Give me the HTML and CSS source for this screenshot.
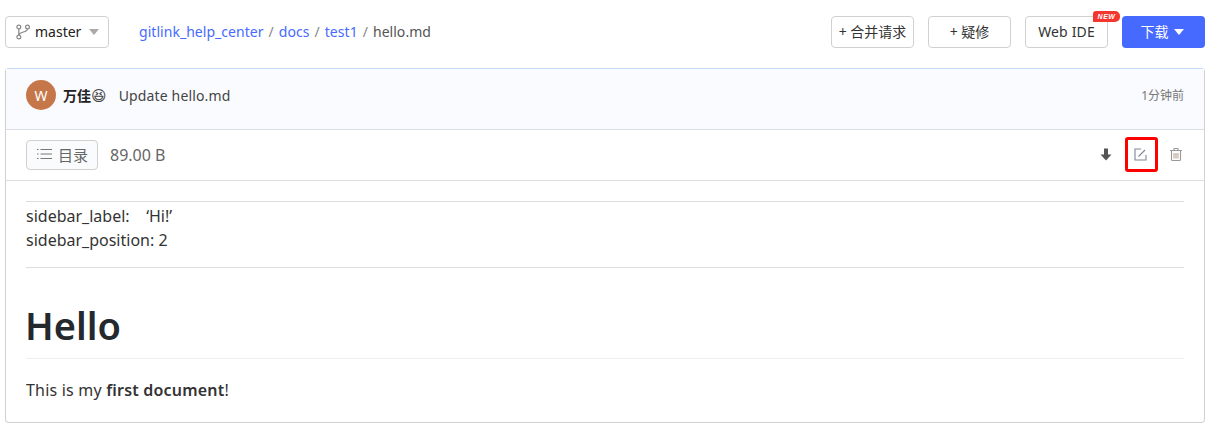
FILE: index.html
```html
<!DOCTYPE html>
<html lang="zh">
<head>
<meta charset="utf-8">
<title>hello.md</title>
<link rel="stylesheet" href="styles.css">
</head>
<body>
<div class="top">
  <div class="left">
    <button class="btn branch">
      <svg class="branch-icon" width="14" height="16" viewBox="0 0 14 16" fill="none" stroke="#888" stroke-width="1.200"><circle cx="2.800" cy="3" r="1.900"/><circle cx="2.800" cy="13" r="1.900"/><circle cx="11.500" cy="3" r="1.900"/><path d="M2.800 4.900V11.100M11.500 4.900C11.500 8.500 3.400 7.500 2.800 11.100"/></svg>
      <span class="branch-name">master</span>
      <i class="caret grey"></i>
    </button>
    <nav class="crumbs">
      <a>gitlink_help_center</a><span class="sep">/</span><a>docs</a><span class="sep">/</span><a>test1</a><span class="sep">/</span><span class="file">hello.md</span>
    </nav>
  </div>
  <div class="actions">
    <button class="btn act">+ 合并请求</button>
    <button class="btn act">+ 疑修</button>
    <div class="ide-wrap">
      <button class="btn act ide">Web IDE</button>
      <span class="new">NEW</span>
    </div>
    <button class="btn download">下载<i class="caret white"></i></button>
  </div>
</div>
<main class="card">
  <header class="commit">
    <div class="avatar">W</div>
    <strong class="author">万佳<span class="emoji">😆</span></strong>
    <span class="message">Update hello.md</span>
    <span class="time">1分钟前</span>
  </header>
  <div class="toolbar">
    <button class="toc">
      <svg width="16" height="12" viewBox="0 0 16 12" fill="none" stroke="#777" stroke-width="1"><path d="M0 1.500H1.500M0 6H1.500M0 10.500H1.500M3.500 1.500H15M3.500 6H15M3.500 10.500H15"/></svg>
      目录
    </button>
    <span class="size">89.00 B</span>
    <div class="tools">
      <svg class="ico" width="12" height="13" viewBox="0 0 12 13"><path d="M4 0.500H8V6.500H11.500L6 12.500 0.500 6.500H4Z" fill="#555"/></svg>
      <svg class="ico" width="13" height="13" viewBox="0 0 13 13" fill="none" stroke="#7b8794" stroke-width="1.100"><path d="M7 1H1V12H12V7"/><path d="M4.500 8.500L11 2"/></svg>
      <svg class="ico" width="14" height="15" viewBox="0 0 14 15" fill="none" stroke-width="1.100"><path d="M1 3.500H13M5 3.500V1.500H9V3.500" stroke="#999"/><path d="M2.500 3.500V12.500Q2.500 13.500 3.500 13.500H10.500Q11.500 13.500 11.500 12.500V3.500" stroke="#999"/><path d="M5 6V11.500" stroke="#d9a066"/><path d="M7 6V11.500" stroke="#7fa8d9"/><path d="M9 6V11.500" stroke="#d9a066"/></svg>
    </div>
    <div class="mark"></div>
  </div>
  <article class="doc">
    <hr class="rule">
    <p class="meta">sidebar_label: &nbsp;&nbsp;&nbsp;‘Hi!’<br>sidebar_position: 2</p>
    <hr class="rule second">
    <h1>Hello</h1>
    <p class="body-text">This is my <strong>first document</strong>!</p>
  </article>
</main>
</body>
</html>
```
FILE: styles.css
```css
* { box-sizing: border-box; }
html, body { margin: 0; padding: 0; }
body {
  width: 1215px;
  height: 434px;
  overflow: hidden;
  background: #fff;
  color: #333;
  font-family: "Noto Sans", "Noto Sans CJK SC", sans-serif;
  font-size: 14px;
}
.top {
  display: flex;
  justify-content: space-between;
  align-items: center;
  height: 32px;
  margin: 16px 10px 20px 5px;
}
.left, .actions { display: flex; align-items: center; }
.btn {
  height: 32px;
  border: 1px solid #d0d0d0;
  border-radius: 4px;
  background: #fff;
  color: #333;
  font: inherit;
  padding: 0 0 2px;
  display: flex;
  align-items: center;
  justify-content: center;
}
.branch { width: 104px; padding-left: 10px; justify-content: flex-start; }
.branch-icon { margin: 2px 5px 0 0; }
.branch-name { color: #222; }
.caret {
  display: inline-block;
  width: 0;
  height: 0;
  border-left: 5px solid transparent;
  border-right: 5px solid transparent;
}
.caret.grey { border-top: 6px solid #aaa; margin: 2px 0 0 8px; }
.caret.white { border-top: 6px solid #fff; margin: 2px 0 0 5px; }
.crumbs { margin: -2px 0 0 30px; display: flex; align-items: center; color: #666; letter-spacing: 0.04px; }
.crumbs a { color: #466aff; }
.sep { margin: 0 5px; color: #888; }
.file { color: #555; }
.actions { gap: 14px; }
.act { width: 83px; font-size: 14px; }
.ide { letter-spacing: 0.15px; }
.ide-wrap { position: relative; }
.new {
  position: absolute;
  top: -5px;
  right: -12px;
  width: 27px;
  height: 11px;
  border-radius: 3px 5px 5px 0;
  background: #f5362f;
  color: #fff;
  font: italic 700 7px/11px "Liberation Sans", sans-serif;
  letter-spacing: 0.5px;
  text-align: center;
}
.download {
  width: 83px;
  padding-right: 3px;
  border: 0;
  background: #466aff;
  color: #fff;
}
.card {
  margin: 0 10px 0 5px;
  height: 355px;
  border: 1px solid #d0d0d0;
  border-top-color: #c5d8f7;
  border-radius: 4px;
}
.commit {
  display: flex;
  align-items: center;
  height: 61px;
  padding: 0 20px 8px;
  background: #fafbff;
  border-bottom: 1px solid #d8dde8;
}
.avatar {
  width: 30px;
  height: 30px;
  border-radius: 50%;
  background: #c6774a;
  color: #fff;
  display: flex;
  align-items: center;
  justify-content: center;
  font-size: 14px;
}
.author { margin-left: 7px; font-size: 14px; color: #222; }
.emoji { font-family: "DejaVu Sans", sans-serif; font-weight: 400; font-size: 15px; color: #444; }
.message { margin-left: 12px; color: #444; font-size: 14px; letter-spacing: 0.15px; }
.time { margin-left: auto; color: #777; font-size: 12px; }
.toolbar {
  position: relative;
  display: flex;
  align-items: center;
  height: 51px;
  padding: 0 20px;
  border-bottom: 1px solid #ddd;
}
.toc {
  display: flex;
  align-items: center;
  gap: 5px;
  height: 30px;
  width: 72px;
  padding: 0 0 2px 10px;
  border: 1px solid #d0d0d0;
  border-radius: 4px;
  background: #fafbfc;
  color: #666;
  font: inherit;
  font-size: 15px;
}
.size { margin: -1px 0 0 12px; color: #666; font-size: 16px; }
.tools { margin: -2px 1px 0 auto; display: flex; align-items: center; gap: 22px; }
.mark {
  position: absolute;
  left: 1119px;
  top: 7px;
  width: 33px;
  height: 35px;
  border: 3px solid #f00;
  border-radius: 3px;
}
.doc { padding: 20px 20px 0; color: #333; font-size: 16px; line-height: 24px; }
.rule { margin: 0; border: 0; border-top: 1px solid #ddd; }
.meta { margin: 2px 0 15px; }
.second { margin-bottom: 32px; }
h1 {
  margin: 0 0 19px;
  padding-bottom: 8px;
  border-bottom: 1px solid #eee;
  color: #24292e;
  font-size: 38px;
  line-height: 50px;
  font-weight: 600;
  text-indent: -1px;
}
.body-text { margin: 0; letter-spacing: 0.2px; }
.body-text strong { font-weight: 600; }
```
